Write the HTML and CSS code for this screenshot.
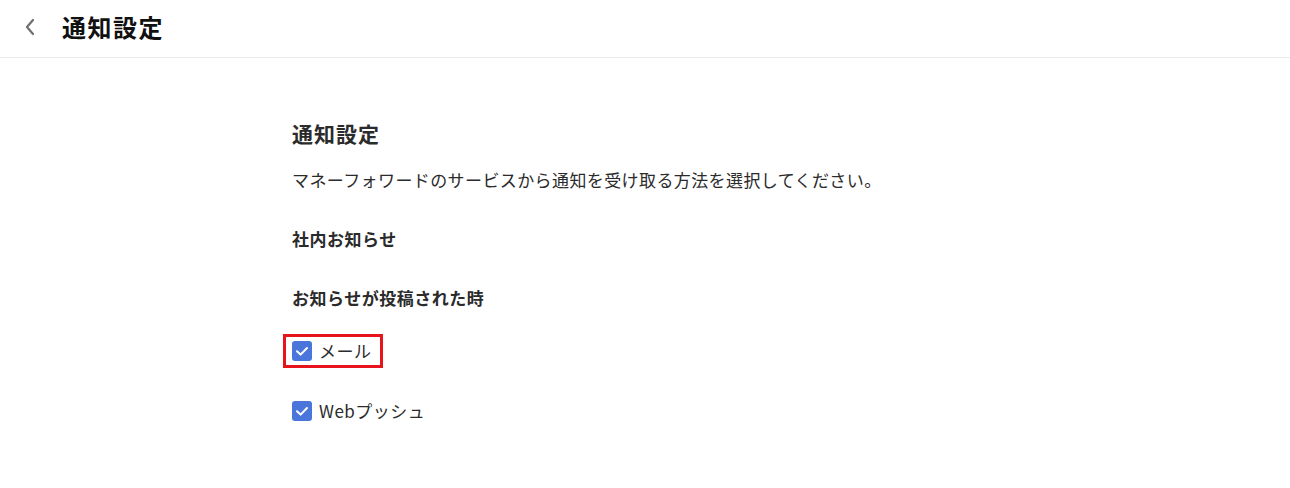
FILE: index.html
```html
<!DOCTYPE html>
<html lang="ja">
<head>
    <meta charset="UTF-8">
    <meta name="viewport" content="width=device-width, initial-scale=1.0">
    <title>通知設定</title>
    <link rel="stylesheet" href="styles.css">
</head>
<body>
    <header class="topbar">
        <a class="back" href="#" aria-label="戻る">
            <svg width="12" height="18" viewBox="0 0 12 18"><path d="M9 2 L3 9 L9 16" fill="none" stroke="#6f6f6f" stroke-width="2.2" stroke-linecap="round" stroke-linejoin="round"/></svg>
        </a>
        <h1>通知設定</h1>
    </header>

    <main class="content">
        <h2>通知設定</h2>
        <p class="desc">マネーフォワードのサービスから通知を受け取る方法を選択してください。</p>

        <h3 class="group">社内お知らせ</h3>
        <h4 class="sub">お知らせが投稿された時</h4>

        <div class="options">
            <label class="option highlight">
                <span class="box"><svg width="20" height="20" viewBox="0 0 20 20"><path d="M5 10.2 L8.6 13.6 L15 7" fill="none" stroke="#fff" stroke-width="2" stroke-linecap="round" stroke-linejoin="round"/></svg></span>
                メール
            </label>
            <label class="option">
                <span class="box"><svg width="20" height="20" viewBox="0 0 20 20"><path d="M5 10.2 L8.6 13.6 L15 7" fill="none" stroke="#fff" stroke-width="2" stroke-linecap="round" stroke-linejoin="round"/></svg></span>
                Webプッシュ
            </label>
        </div>
    </main>
</body>
</html>
```

FILE: styles.css
```css
body {
    margin: 0;
    font-family: "Noto Sans CJK JP", "Noto Sans", sans-serif;
    color: #2b2b2b;
    background: #fff;
}

.topbar {
    height: 58px;
    display: flex;
    align-items: center;
    border-bottom: 1px solid #ebebeb;
    box-sizing: border-box;
    padding-left: 24px;
    padding-bottom: 4px;
}

.back {
    display: flex;
    width: 14px;
    margin-right: 24px;
}

.topbar h1 {
    margin: 0;
    font-size: 24px;
    font-weight: bold;
    letter-spacing: 1.5px;
    color: #111;
}

.content {
    width: 706px;
    margin: 0 auto;
    padding-top: 60px;
}

.content h2 {
    margin: 0;
    font-size: 21px;
    line-height: 30px;
    letter-spacing: 1px;
    font-weight: bold;
}

.desc {
    margin: 18px 0 0;
    font-size: 17px;
    line-height: 28px;
    letter-spacing: 0.4px;
}

.group, .sub {
    margin: 0;
    font-size: 17px;
    line-height: 28px;
    letter-spacing: 0.5px;
    font-weight: bold;
}

.group {
    margin-top: 31px;
}

.sub {
    margin-top: 31px;
}

.options {
    display: flex;
    flex-direction: column;
    align-items: flex-start;
    gap: 26px;
    margin-top: 22px;
}

.option {
    display: flex;
    align-items: center;
    gap: 7px;
    font-size: 17px;
    line-height: 28px;
    letter-spacing: 0.5px;
    padding: 0 8px 0 6px;
    border: 3px solid transparent;
    margin-left: -9px;
}

.option.highlight {
    border-color: #e8141b;
}

.box {
    width: 20px;
    height: 20px;
    border-radius: 3px;
    background: #4a76dc;
    display: flex;
}
```
